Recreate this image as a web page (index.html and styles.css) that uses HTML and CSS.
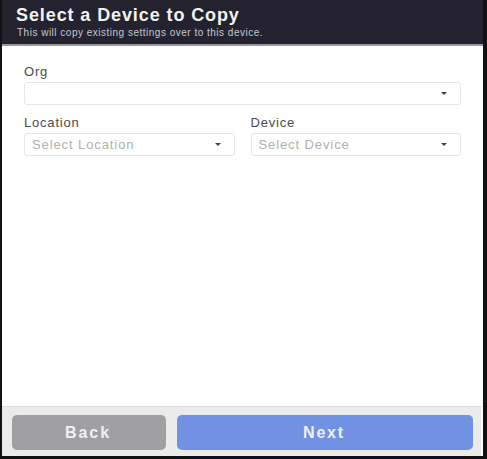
FILE: index.html
```html
<!DOCTYPE html>
<html>
<head>
<meta charset="utf-8">
<link rel="stylesheet" href="styles.css">
</head>
<body>
<div class="frame">
  <header class="head">
    <h1 class="title">Select a Device to Copy</h1>
    <p class="sub">This will copy existing settings over to this device.</p>
  </header>
  <main class="content">
    <div class="field">
      <label class="label">Org</label>
      <div class="select"><span class="ph"></span><span class="caret"></span></div>
    </div>
    <div class="row">
      <div class="field">
        <label class="label">Location</label>
        <div class="select"><span class="ph">Select Location</span><span class="caret"></span></div>
      </div>
      <div class="field">
        <label class="label">Device</label>
        <div class="select"><span class="ph">Select Device</span><span class="caret"></span></div>
      </div>
    </div>
  </main>
  <footer class="foot">
    <button class="btn back">Back</button>
    <button class="btn next">Next</button>
  </footer>
</div>
</body>
</html>
```

FILE: styles.css
```css
* { box-sizing: border-box; }
html, body { margin: 0; padding: 0; background: #fff; }
body { font-family: "Liberation Sans", Arial, sans-serif; }
.frame {
  width: 487px;
  height: 459px;
  display: flex;
  flex-direction: column;
  border-left: 2px solid #111;
  border-right: 4px solid #111;
  border-bottom: 3px solid #111;
  background: #fff;
}
.head {
  background: #24222f;
  height: 46px;
  padding: 5px 0 0 14px;
  border-bottom: 2px solid #9a9aa0;
}
.title {
  margin: 0;
  font-size: 18px;
  line-height: 21px;
  font-weight: bold;
  letter-spacing: 0.9px;
  color: #f2f2f2;
}
.sub {
  margin: 1px 0 0 1px;
  font-size: 10px;
  line-height: 12px;
  letter-spacing: 0.5px;
  color: #c9c9cf;
}
.content {
  flex: 1;
  padding: 18px 22px 0 22px;
  display: flex;
  flex-direction: column;
  gap: 10px;
}
.row {
  display: flex;
  gap: 16px;
}
.row .field { flex: 1; }
.label {
  display: block;
  font-size: 13px;
  line-height: 16px;
  letter-spacing: 0.8px;
  color: #4a4a4a;
  margin-bottom: 2px;
}
.select {
  height: 23px;
  border: 1px solid #e6e6e6;
  border-radius: 3px;
  display: flex;
  align-items: center;
  justify-content: space-between;
  padding: 0 13px 0 7px;
}
.ph {
  font-size: 13px;
  letter-spacing: 0.9px;
  color: #b0b0b0;
}
.caret {
  width: 0;
  height: 0;
  border-left: 3px solid transparent;
  border-right: 3px solid transparent;
  border-top: 3px solid #444;
}
.foot {
  height: 50px;
  background: #ebebeb;
  border-top: 1px solid #dcdcdc;
  border-right: 2px solid #fff;
  display: flex;
  gap: 11px;
  padding: 8px 8px 6px 10px;
}
.btn {
  border: 0;
  border-radius: 5px;
  font-family: "Liberation Sans", Arial, sans-serif;
  font-size: 16px;
  font-weight: bold;
  color: #eef0f6;
  height: 35px;
}
.back {
  width: 154px;
  background: #a09fa4;
  letter-spacing: 2px;
  padding-left: 4px;
}
.next {
  flex: 1;
  background: #7191e2;
  letter-spacing: 1.8px;
  padding-left: 4px;
}
```
